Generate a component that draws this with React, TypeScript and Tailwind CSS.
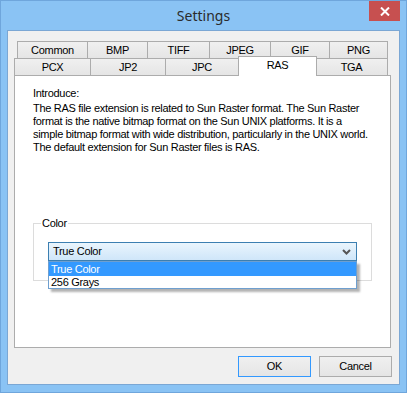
const rowOne = [
  { label: 'Common', w: 'w-[71px]' },
  { label: 'BMP', w: 'w-[60px]' },
  { label: 'TIFF', w: 'w-[62px]' },
  { label: 'JPEG', w: 'w-[61px]' },
  { label: 'GIF', w: 'w-[59px]' },
  { label: 'PNG', w: 'w-[58px]' },
];

const rowTwo = [
  { label: 'PCX', w: 'w-[77px]' },
  { label: 'JP2', w: 'w-[75px]' },
  { label: 'JPC', w: 'w-[73px]' },
  { label: 'RAS', w: 'w-[79px]', active: true },
  { label: 'TGA', w: 'w-[72px]' },
];

const font = "font-['Liberation_Sans',Arial,sans-serif]";

function Tab({ label, w, active, first }: { label: string; w: string; active?: boolean; first?: boolean }) {
  if (active) {
    return (
      <div
        className={`${w} relative z-10 -mt-[2px] -ml-px -mr-px h-[20px] bg-white border-x border-t border-[#acacac] flex items-center justify-center pb-[3px]`}
      >
        {label}
      </div>
    );
  }
  return (
    <div
      className={`${w} h-[17px] shrink-0 border-t border-r ${first ? 'border-l' : ''} border-[#acacac] bg-gradient-to-b from-[#f0f0f0] to-[#e5e5e5] flex items-center justify-center`}
    >
      {label}
    </div>
  );
}

export default function App() {
  return (
    <div className={`w-[407px] h-[393px] bg-[#8ac3f4] border border-[#6fa6dc] flex flex-col text-[11px] tracking-[-0.3px] text-black ${font}`}>
      {/* Barre de titre */}
      <div className="relative h-[29px] shrink-0 flex items-center justify-center pb-px">
        <span className="font-['Noto_Sans',sans-serif] text-[14px] tracking-normal text-[#2b2b2b]">Settings</span>
        <div className="absolute right-[6px] top-0 w-[31px] h-[20px] bg-[#c75050] flex items-center justify-center">
          <svg width="10" height="9" viewBox="0 0 10 9">
            <path d="M1 0.5 L9 8.5 M9 0.5 L1 8.5" stroke="#fff" strokeWidth="2" />
          </svg>
        </div>
      </div>

      {/* Zone client */}
      <div className="mx-[6px] mb-[7px] flex-1 bg-[#f0f0f0] border border-[#7ba7d4] flex flex-col pt-[10px] pl-[6px] pr-[8px] pb-[7px]">
        {/* Onglets */}
        <div className="flex ml-[3px]">
          {rowOne.map((t, i) => (
            <Tab key={t.label} label={t.label} w={t.w} first={i === 0} />
          ))}
        </div>
        <div className="flex h-[17px] items-start">
          {rowTwo.map((t, i) => (
            <Tab key={t.label} label={t.label} w={t.w} active={t.active} first={i === 0} />
          ))}
        </div>

        {/* Panneau */}
        <div className="flex-1 bg-white border border-[#acacac] px-[18px] pt-[11px] flex flex-col">
          <div className="leading-[13px]">Introduce:</div>
          <div className="leading-[13px] mt-[2px]">
            <div>The RAS file extension is related to Sun Raster format. The Sun Raster</div>
            <div>format is the native bitmap format on the Sun UNIX platforms. It is a</div>
            <div>simple bitmap format with wide distribution, particularly in the UNIX world.</div>
            <div>The default extension for Sun Raster files is RAS.</div>
          </div>

          <fieldset className="mt-[63px] border border-[#dcdcdc] px-[14px] pb-[19px] pt-[12px]">
            <legend className="-ml-[7px] px-px leading-[13px]">Color</legend>
            <div className="relative">
              <div className="h-[19px] border border-[#3c7fb1] bg-gradient-to-b from-[#eaf5fd] to-[#cfe6f9] flex items-center pl-[4px] pr-[5px]">
                <span className="flex-1">True Color</span>
                <svg width="9" height="6" viewBox="0 0 9 6">
                  <path d="M1 1 L4.5 4.5 L8 1" stroke="#555" strokeWidth="2" fill="none" />
                </svg>
              </div>
              <div className="absolute left-0 top-full w-full bg-white border border-[#6f9fcf] shadow-[3px_3px_2px_rgba(0,0,0,0.3)] z-20">
                <div className="h-[14px] bg-[#3399ff] text-white leading-[14px] pl-[2px]">True Color</div>
                <div className="h-[12px] leading-[12px] pl-[2px]">256 Grays</div>
              </div>
            </div>
          </fieldset>
        </div>

        {/* Boutons */}
        <div className="flex justify-end gap-[8px] mt-[8px] -mr-px">
          <button className="w-[73px] h-[21px] border border-[#3399ff] bg-gradient-to-b from-[#f0f0f0] to-[#e5e5e5]">OK</button>
          <button className="w-[73px] h-[21px] border border-[#acacac] bg-gradient-to-b from-[#f0f0f0] to-[#e5e5e5]">Cancel</button>
        </div>
      </div>
    </div>
  );
}
